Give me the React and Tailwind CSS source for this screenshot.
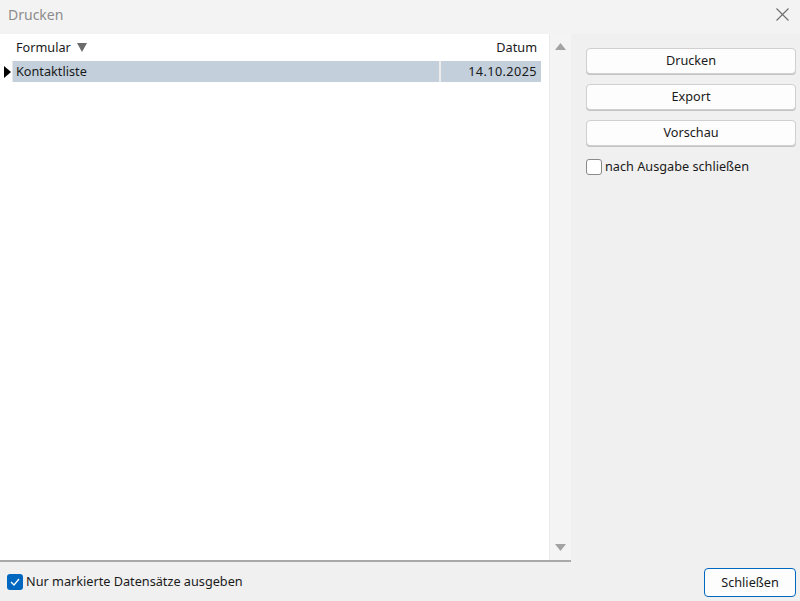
import React, { useState } from "react";

const ROWS = [{ id: 1, name: "Kontaktliste", date: "14.10.2025" }];

function TriUp() {
  return (
    <svg width="11" height="7" viewBox="0 0 11 7">
      <path d="M5.5 0 L11 7 L0 7 Z" fill="#a3a3a3" />
    </svg>
  );
}

function TriDown() {
  return (
    <svg width="11" height="7" viewBox="0 0 11 7">
      <path d="M0 0 L11 0 L5.5 7 Z" fill="#a3a3a3" />
    </svg>
  );
}

function Button({ children, primary }) {
  return (
    <button
      className={
        primary
          ? "w-[92px] h-[29px] rounded-[4px] border border-[#0067c0] bg-[#fdfdfd] text-[12.7px] text-[#1a1a1a]"
          : "w-full h-[26px] rounded-[4px] border border-[#d0d0d0] bg-[#fdfdfd] text-[12.7px] text-[#1a1a1a] shadow-[0_1px_0_#c4c4c4]"
      }
    >
      {children}
    </button>
  );
}

export default function App() {
  const [closeAfter, setCloseAfter] = useState(false);
  const [onlyMarked, setOnlyMarked] = useState(true);

  return (
    <div
      className="w-[800px] h-[601px] bg-[#f0f0f0] flex flex-col overflow-hidden text-[#1a1a1a]"
      style={{ fontFamily: '"Noto Sans", "Open Sans", sans-serif' }}
    >
      {/* title bar */}
      <div className="h-[34px] bg-[#f3f3f3] flex items-start justify-between pl-[8px] pr-[11px] pt-[4px]">
        <span className="text-[14px] text-[#8c8c8c]">Drucken</span>
        <svg width="13" height="13" viewBox="0 0 13 13" className="mt-[4px]">
          <path d="M0.5 0.5 L12.5 12.5 M12.5 0.5 L0.5 12.5" stroke="#6e6e6e" strokeWidth="1.1" />
        </svg>
      </div>

      <div className="flex-1 flex">
        {/* left column */}
        <div className="w-[571px] flex flex-col">
          <div className="h-[528px] flex bg-white border-b-2 border-[#a9a9a9]">
            <div className="flex-1 flex flex-col text-[12.7px]">
              <div className="h-[27px] flex items-center pt-[1px]">
                <div className="w-[14px]" />
                <div className="flex-1 pl-[2px] flex items-center gap-[6px]">
                  <span>Formular</span>
                  <svg width="10" height="9" viewBox="0 0 10 9">
                    <path d="M0 0 L10 0 L5 9 Z" fill="#6b6b6b" />
                  </svg>
                </div>
                <div className="w-[100px] text-right pr-[4px]">Datum</div>
                <div className="w-[8px]" />
              </div>
              {ROWS.map((r) => (
                <div key={r.id} className="h-[21px] flex">
                  <div className="w-[13px] flex items-center justify-start pl-[4px] border-r border-[#e6e6e6]">
                    <svg width="7" height="12" viewBox="0 0 7 12">
                      <path d="M0 0 L7 6 L0 12 Z" fill="#000" />
                    </svg>
                  </div>
                  <div className="flex-1 bg-[#c3d0dc] pl-[3px] flex items-center border-r-2 border-[#ececec]">
                    {r.name}
                  </div>
                  <div className="w-[100px] bg-[#c3d0dc] flex items-center justify-end pr-[4px] tracking-[0.4px]">
                    {r.date}
                  </div>
                  <div className="w-[8px]" />
                </div>
              ))}
            </div>
            <div className="w-[22px] bg-[#f4f4f4] border-l border-[#eaeaea] flex flex-col items-center justify-between py-[9px]">
              <TriUp />
              <TriDown />
            </div>
          </div>
          <div className="flex-1 flex items-center pl-[7px] gap-[3px]">
            <button
              onClick={() => setOnlyMarked(!onlyMarked)}
              className={
                onlyMarked
                  ? "w-[16px] h-[16px] rounded-[3px] bg-[#0067c0] flex items-center justify-center"
                  : "w-[16px] h-[16px] rounded-[3px] border border-[#8a8a8a] bg-white"
              }
            >
              {onlyMarked && (
                <svg width="10" height="8" viewBox="0 0 10 8">
                  <path d="M1 4 L4 7 L9 1" stroke="#fff" strokeWidth="1.3" fill="none" />
                </svg>
              )}
            </button>
            <span className="text-[12.7px]">Nur markierte Datensätze ausgeben</span>
          </div>
        </div>

        {/* right column */}
        <div className="flex-1 flex flex-col pl-[15px] pr-[4px] pt-[14px]">
          <div className="flex flex-col gap-[10px]">
            <Button>Drucken</Button>
            <Button>Export</Button>
            <Button>Vorschau</Button>
          </div>
          <div className="flex items-center gap-[3px] mt-[11px]">
            <button
              onClick={() => setCloseAfter(!closeAfter)}
              className="w-[16px] h-[16px] rounded-[3px] border border-[#8a8a8a] bg-white"
            />
            <span className="text-[12.7px]">nach Ausgabe schließen</span>
          </div>
          <div className="flex-1" />
          <div className="flex justify-end pb-[4px]">
            <Button primary>Schließen</Button>
          </div>
        </div>
      </div>
    </div>
  );
}
